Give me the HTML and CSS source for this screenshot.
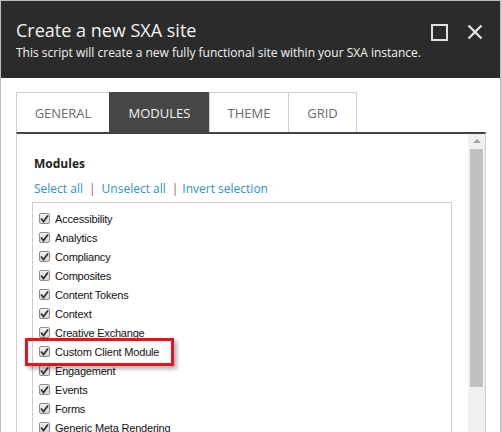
FILE: index.html
```html
<!DOCTYPE html>
<html>
<head>
<meta charset="utf-8">
<link rel="stylesheet" href="styles.css">
</head>
<body>
<div class="dialog">
  <div class="header">
    <div class="titles">
      <div class="title">Create a new SXA site</div>
      <div class="subtitle">This script will create a new fully functional site within your SXA instance.</div>
    </div>
    <div class="controls">
      <span class="max"></span>
      <svg class="close" width="16" height="16" viewBox="0 0 16 16"><path d="M1.5 1.5 L14.5 14.5 M14.5 1.5 L1.5 14.5" stroke="#e8e8e8" stroke-width="2.2" fill="none"/></svg>
    </div>
  </div>
  <div class="body">
    <div class="tabs">
      <div class="tab t-general">GENERAL</div>
      <div class="tab t-modules active">MODULES</div>
      <div class="tab t-theme">THEME</div>
      <div class="tab t-grid">GRID</div>
    </div>
    <div class="panel">
      <div class="content">
        <div class="heading">Modules</div>
        <div class="links"><a>Select all</a><span class="sep s1">|</span><a>Unselect all</a><span class="sep s2">|</span><a>Invert selection</a></div>
        <div class="listbox">
          <div class="item"><span class="cb"><svg width="9" height="9" viewBox="0 0 9 9"><path d="M1 4.5 L3.5 7.5 L8 1.5" stroke="#333" stroke-width="1.8" fill="none"/></svg></span>Accessibility</div>
          <div class="item"><span class="cb"><svg width="9" height="9" viewBox="0 0 9 9"><path d="M1 4.5 L3.5 7.5 L8 1.5" stroke="#333" stroke-width="1.8" fill="none"/></svg></span>Analytics</div>
          <div class="item"><span class="cb"><svg width="9" height="9" viewBox="0 0 9 9"><path d="M1 4.5 L3.5 7.5 L8 1.5" stroke="#333" stroke-width="1.8" fill="none"/></svg></span>Compliancy</div>
          <div class="item"><span class="cb"><svg width="9" height="9" viewBox="0 0 9 9"><path d="M1 4.5 L3.5 7.5 L8 1.5" stroke="#333" stroke-width="1.8" fill="none"/></svg></span>Composites</div>
          <div class="item"><span class="cb"><svg width="9" height="9" viewBox="0 0 9 9"><path d="M1 4.5 L3.5 7.5 L8 1.5" stroke="#333" stroke-width="1.8" fill="none"/></svg></span>Content Tokens</div>
          <div class="item"><span class="cb"><svg width="9" height="9" viewBox="0 0 9 9"><path d="M1 4.5 L3.5 7.5 L8 1.5" stroke="#333" stroke-width="1.8" fill="none"/></svg></span>Context</div>
          <div class="item"><span class="cb"><svg width="9" height="9" viewBox="0 0 9 9"><path d="M1 4.5 L3.5 7.5 L8 1.5" stroke="#333" stroke-width="1.8" fill="none"/></svg></span>Creative Exchange</div>
          <div class="item"><span class="cb"><svg width="9" height="9" viewBox="0 0 9 9"><path d="M1 4.5 L3.5 7.5 L8 1.5" stroke="#333" stroke-width="1.8" fill="none"/></svg></span>Custom Client Module</div>
          <div class="item"><span class="cb"><svg width="9" height="9" viewBox="0 0 9 9"><path d="M1 4.5 L3.5 7.5 L8 1.5" stroke="#333" stroke-width="1.8" fill="none"/></svg></span>Engagement</div>
          <div class="item"><span class="cb"><svg width="9" height="9" viewBox="0 0 9 9"><path d="M1 4.5 L3.5 7.5 L8 1.5" stroke="#333" stroke-width="1.8" fill="none"/></svg></span>Events</div>
          <div class="item"><span class="cb"><svg width="9" height="9" viewBox="0 0 9 9"><path d="M1 4.5 L3.5 7.5 L8 1.5" stroke="#333" stroke-width="1.8" fill="none"/></svg></span>Forms</div>
          <div class="item"><span class="cb"><svg width="9" height="9" viewBox="0 0 9 9"><path d="M1 4.5 L3.5 7.5 L8 1.5" stroke="#333" stroke-width="1.8" fill="none"/></svg></span>Generic Meta Rendering</div>
          <div class="highlight"></div>
        </div>
      </div>
      <div class="scrollbar">
        <div class="arrow"></div>
        <div class="thumb"></div>
      </div>
    </div>
  </div>
</div>
</body>
</html>
```
FILE: styles.css
```css
html, body {
  margin: 0;
  padding: 0;
  overflow: hidden;
  background: #d0d0d0;
}
.dialog {
  width: 499px;
  height: 431px;
  overflow: hidden;
  border: 1px solid #bdbdbd;
  border-bottom: none;
  background: #fff;
  font-family: "Open Sans", "Noto Sans", sans-serif;
}
.header {
  background: #2b2b2b;
  height: 77px;
  display: flex;
  justify-content: space-between;
  padding-left: 15px;
  color: #f2f2f2;
}
.titles {
  padding-top: 17px;
}
.title {
  font-size: 18px;
  line-height: 25px;
  letter-spacing: 0;
}
.subtitle {
  font-size: 12px;
  line-height: 18px;
  margin-top: 1px;
}
.controls {
  display: flex;
  align-items: flex-start;
  gap: 19px;
  padding-top: 23px;
  padding-right: 17px;
}
.max {
  width: 13px;
  height: 13px;
  border: 2px solid #e0e0e0;
  display: block;
}
.close {
  display: block;
}
.body {
  padding: 14px 14px 0 15px;
}
.tabs {
  display: flex;
  height: 40px;
}
.tab {
  box-sizing: border-box;
  border: 1px solid #cfcfcf;
  border-bottom: none;
  border-right: none;
  display: flex;
  align-items: center;
  justify-content: center;
  font-size: 13px;
  color: #6a6a6a;
  padding-top: 1px;
}
.t-general { width: 93px; }
.t-modules { width: 100px; }
.t-theme { width: 79px; }
.t-grid { width: 69px; border-right: 1px solid #cfcfcf; }
.tab.active {
  background: #464646;
  color: #f4f4f4;
  border-color: #464646;
}
.panel {
  width: 470px;
  box-sizing: border-box;
  border-top: 2px solid #444;
  border-left: 1px solid #cfcfcf;
  border-right: 1px solid #cfcfcf;
  display: flex;
  height: 320px;
}
.content {
  flex: 1;
  padding: 21px 0 0 15px;
}
.heading {
  font-weight: bold;
  font-size: 12px;
  color: #222;
  padding-left: 2px;
  line-height: 18px;
}
.links {
  padding-left: 2px;
  margin-top: 7px;
  font-size: 12px;
  line-height: 18px;
  color: #2a94c8;
}
.links a { color: #2a94c8; }
.sep {
  color: #a8466e;
}
.s1 { margin: 0 6px 0 6px; }
.s2 { margin: 0 4px 0 6px; }
.listbox {
  position: relative;
  margin-top: 4px;
  width: 420px;
  height: 300px;
  box-sizing: border-box;
  border: 1px solid #cccccc;
  padding: 6px 0 0 6px;
}
.item {
  display: flex;
  align-items: center;
  height: 19px;
  font-family: "Liberation Sans", Arial, sans-serif;
  font-size: 11px;
  letter-spacing: -0.2px;
  color: #111;
}
.cb {
  box-sizing: border-box;
  width: 11px;
  height: 11px;
  border: 1px solid #8c8c8c;
  border-radius: 2px;
  background: linear-gradient(#f2f2f2, #d8d8d8);
  display: flex;
  align-items: center;
  justify-content: center;
  margin-right: 5px;
}
.cb svg { display: block; }
.highlight {
  position: absolute;
  left: -8px;
  top: 135px;
  width: 149px;
  height: 28px;
  box-sizing: border-box;
  border: 3px solid #e8141b;
  box-shadow: 3px 3px 4px rgba(0, 0, 0, 0.3);
}
.scrollbar {
  width: 17px;
  background: #f0f0f0;
  display: flex;
  flex-direction: column;
  align-items: center;
}
.arrow {
  width: 0;
  height: 0;
  border-left: 4px solid transparent;
  border-right: 4px solid transparent;
  border-bottom: 4px solid #a3a3a3;
  margin-top: 5px;
}
.thumb {
  width: 13px;
  height: 238px;
  background: #c1c1c1;
  margin-top: 6px;
}
```
